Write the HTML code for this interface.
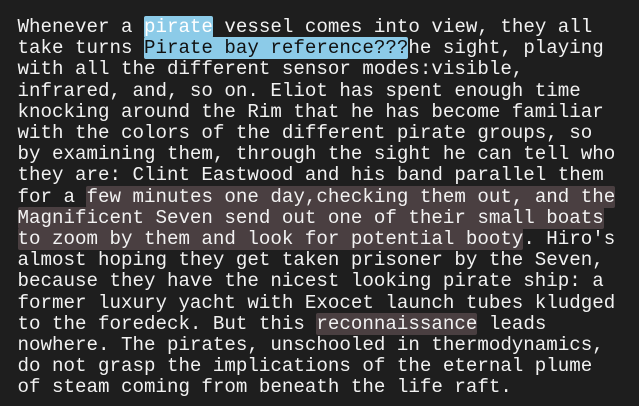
<!DOCTYPE html>
<html><head><meta charset="utf-8"><style>
html,body{margin:0;padding:0;background:#1e1e1e;width:639px;height:406px;overflow:hidden}
pre{margin:0;position:absolute;left:17.5px;top:17px;font-family:"Liberation Mono",monospace;font-size:19.17px;line-height:21.2px;color:#f2f2f2;white-space:pre}
.b{background:#8ccbe8;color:#fff;border-radius:2px}
.t{background:#8ccbe8;color:#111;border-radius:2px}
.h{background:#4a3f41;border-radius:2px}
</style></head><body><pre>Whenever a <span class="b">pirate</span> vessel comes into view, they all
take turns <span class="t">Pirate bay reference???</span>he sight, playing
with all the different sensor modes:visible,
infrared, and, so on. Eliot has spent enough time
knocking around the Rim that he has become familiar
with the colors of the different pirate groups, so
by examining them, through the sight he can tell who
they are: Clint Eastwood and his band parallel them
for a <span class="h">few minutes one day,checking them out, and the</span>
<span class="h">Magnificent Seven send out one of their small boats</span>
<span class="h">to zoom by them and look for potential booty</span>. Hiro's
almost hoping they get taken prisoner by the Seven,
because they have the nicest looking pirate ship: a
former luxury yacht with Exocet launch tubes kludged
to the foredeck. But this <span class="h">reconnaissance</span> leads
nowhere. The pirates, unschooled in thermodynamics,
do not grasp the implications of the eternal plume
of steam coming from beneath the life raft.</pre></body></html>
